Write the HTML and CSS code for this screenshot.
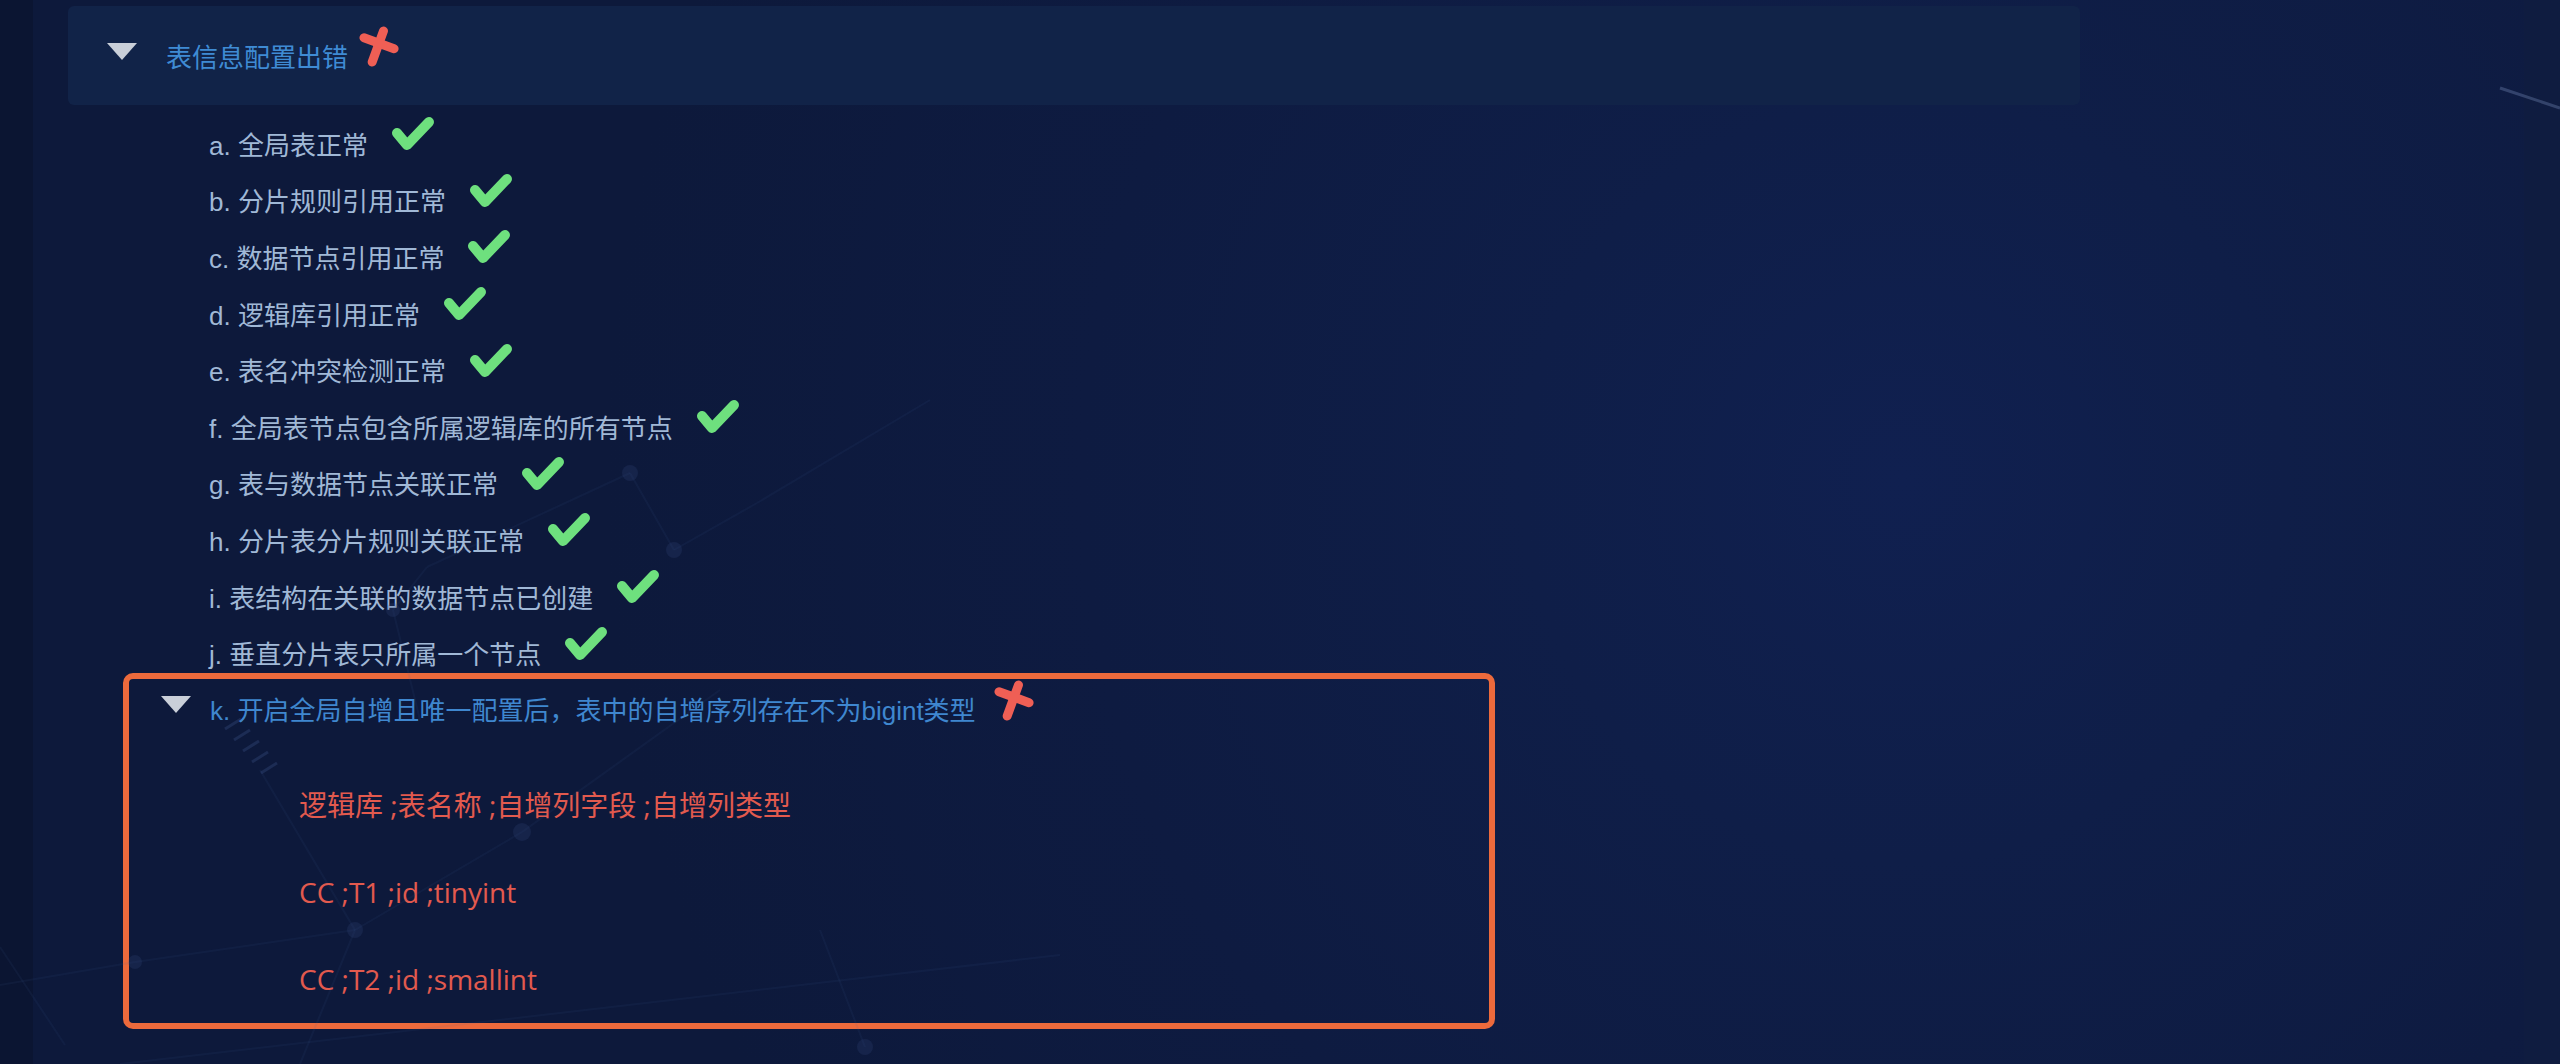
FILE: index.html
```html
<!DOCTYPE html>
<html lang="zh-CN">
<head>
<meta charset="utf-8">
<title>表信息配置检查</title>
<link rel="stylesheet" href="styles.css">
</head>
<body>
<div class="app">
  <svg class="net" viewBox="0 0 2560 1064" aria-hidden="true">
    <g class="net-lines">
      <line x1="630" y1="473" x2="674" y2="550"/>
      <line x1="674" y1="550" x2="757" y2="503"/>
      <line x1="757" y1="503" x2="930" y2="400"/>
      <line x1="630" y1="473" x2="427" y2="567"/>
      <line x1="427" y1="567" x2="393" y2="610"/>
      <line x1="393" y1="610" x2="420" y2="720"/>
      <line x1="260" y1="770" x2="355" y2="930"/>
      <line x1="355" y1="930" x2="522" y2="832"/>
      <line x1="522" y1="832" x2="720" y2="690"/>
      <line x1="135" y1="962" x2="355" y2="930"/>
      <line x1="0" y1="985" x2="135" y2="962"/>
      <line x1="0" y1="947" x2="65" y2="1045"/>
      <line x1="865" y1="1047" x2="820" y2="930"/>
      <line x1="120" y1="1064" x2="1060" y2="955"/>
      <line x1="355" y1="930" x2="300" y2="1064"/>
    </g>
    <g class="net-dots">
      <circle cx="630" cy="473" r="8"/>
      <circle cx="674" cy="550" r="8"/>
      <circle cx="393" cy="610" r="7"/>
      <circle cx="522" cy="832" r="9"/>
      <circle cx="355" cy="930" r="8"/>
      <circle cx="135" cy="962" r="7"/>
      <circle cx="865" cy="1047" r="8"/>
    </g>
    <g class="net-hatch">
      <line x1="225" y1="729" x2="241" y2="719"/>
      <line x1="234" y1="740" x2="250" y2="730"/>
      <line x1="243" y1="751" x2="259" y2="741"/>
      <line x1="252" y1="762" x2="268" y2="752"/>
      <line x1="261" y1="773" x2="277" y2="763"/>
    </g>
    <line class="net-glow" x1="2500" y1="88" x2="2560" y2="108"/>
  </svg>

  <main class="main">
    <section class="tree">
      <div class="group-head">
        <span class="caret"></span>
        <span class="group-title">表信息配置出错</span>
        <svg class="icon-x" viewBox="0 0 42 42" aria-hidden="true">
          <g transform="rotate(20 21 21)">
            <line x1="21" y1="5" x2="21" y2="38"/>
            <line x1="5" y1="18" x2="37" y2="18"/>
          </g>
        </svg>
      </div>

      <ul class="checks">
        <li class="check-item"><span class="item-text">a. 全局表正常</span><svg class="icon-ok" viewBox="0 0 46 38" aria-hidden="true"><polyline points="7,18 17,30 39,7"/></svg></li>
        <li class="check-item"><span class="item-text">b. 分片规则引用正常</span><svg class="icon-ok" viewBox="0 0 46 38" aria-hidden="true"><polyline points="7,18 17,30 39,7"/></svg></li>
        <li class="check-item"><span class="item-text">c. 数据节点引用正常</span><svg class="icon-ok" viewBox="0 0 46 38" aria-hidden="true"><polyline points="7,18 17,30 39,7"/></svg></li>
        <li class="check-item"><span class="item-text">d. 逻辑库引用正常</span><svg class="icon-ok" viewBox="0 0 46 38" aria-hidden="true"><polyline points="7,18 17,30 39,7"/></svg></li>
        <li class="check-item"><span class="item-text">e. 表名冲突检测正常</span><svg class="icon-ok" viewBox="0 0 46 38" aria-hidden="true"><polyline points="7,18 17,30 39,7"/></svg></li>
        <li class="check-item"><span class="item-text">f. 全局表节点包含所属逻辑库的所有节点</span><svg class="icon-ok" viewBox="0 0 46 38" aria-hidden="true"><polyline points="7,18 17,30 39,7"/></svg></li>
        <li class="check-item"><span class="item-text">g. 表与数据节点关联正常</span><svg class="icon-ok" viewBox="0 0 46 38" aria-hidden="true"><polyline points="7,18 17,30 39,7"/></svg></li>
        <li class="check-item"><span class="item-text">h. 分片表分片规则关联正常</span><svg class="icon-ok" viewBox="0 0 46 38" aria-hidden="true"><polyline points="7,18 17,30 39,7"/></svg></li>
        <li class="check-item"><span class="item-text">i. 表结构在关联的数据节点已创建</span><svg class="icon-ok" viewBox="0 0 46 38" aria-hidden="true"><polyline points="7,18 17,30 39,7"/></svg></li>
        <li class="check-item"><span class="item-text">j. 垂直分片表只所属一个节点</span><svg class="icon-ok" viewBox="0 0 46 38" aria-hidden="true"><polyline points="7,18 17,30 39,7"/></svg></li>

        <li class="error-box">
          <div class="err-head">
            <span class="caret"></span>
            <span class="err-title">k. 开启全局自增且唯一配置后，表中的自增序列存在不为bigint类型</span>
            <svg class="icon-x icon-x-sm" viewBox="0 0 42 42" aria-hidden="true">
              <g transform="rotate(20 21 21)">
                <line x1="21" y1="5" x2="21" y2="38"/>
                <line x1="5" y1="18" x2="37" y2="18"/>
              </g>
            </svg>
          </div>
          <div class="err-body">
            <p>逻辑库 ;表名称 ;自增列字段 ;自增列类型</p>
            <p>CC ;T1 ;id ;tinyint</p>
            <p>CC ;T2 ;id ;smallint</p>
          </div>
        </li>
      </ul>
    </section>
  </main>
  <div class="right-strip"></div>
</div>
</body>
</html>
```

FILE: styles.css
```css
* {
  box-sizing: border-box;
}

html, body {
  margin: 0;
  padding: 0;
  width: 2560px;
  height: 1064px;
  overflow: hidden;
  background: #0b1632;
}

.app {
  position: relative;
  width: 2560px;
  height: 1064px;
  display: flex;
  background: #0b1532;
}

.main {
  position: relative;
  z-index: 1;
  margin-left: 33px;
  width: 2491px;
  height: 1064px;
  background:
    radial-gradient(circle at 1870px 480px, #102050 0, #0f1e48 380px, #0e1b41 820px, #0d193b 1300px);
}

.right-strip {
  position: relative;
  z-index: 1;
  flex: 1;
  height: 1064px;
  background: #0f1c40;
}

.net {
  position: absolute;
  left: 0;
  top: 0;
  width: 2560px;
  height: 1064px;
  z-index: 2;
  pointer-events: none;
}

.net-lines line {
  stroke: rgba(70, 95, 150, 0.09);
  stroke-width: 2;
}

.net-dots circle {
  fill: rgba(60, 82, 135, 0.2);
}

.net-hatch line {
  stroke: rgba(70, 95, 150, 0.28);
  stroke-width: 3;
}

.net-glow {
  stroke: rgba(120, 140, 185, 0.35);
  stroke-width: 3;
}

.tree {
  position: relative;
  z-index: 3;
  padding: 6px 0 0 35px;
  font-family: "Liberation Sans", "Noto Sans CJK SC", sans-serif;
}

.group-head {
  width: 2012px;
  height: 99px;
  display: flex;
  align-items: center;
  padding-left: 39px;
  background: #112348;
  border-radius: 6px;
}

.caret {
  width: 0;
  height: 0;
  border-left: 15px solid transparent;
  border-right: 15px solid transparent;
  border-top: 17px solid #c9cfd9;
  margin-top: -8px;
}

.group-title {
  margin-left: 29px;
  font-size: 26px;
  color: #3f8bd4;
  font-family: "Noto Sans CJK SC", sans-serif;
}

.icon-x {
  width: 42px;
  height: 42px;
  margin-left: 9px;
  margin-bottom: 20px;
}

.icon-x line {
  stroke: #ef5f55;
  stroke-width: 9;
  stroke-linecap: round;
}

.checks {
  list-style: none;
  margin: 10px 0 0 0;
  padding: 0;
}

.check-item {
  height: 56.6px;
  display: flex;
  align-items: center;
  padding-left: 141px;
}

.item-text {
  font-size: 26px;
  color: #a0b8d6;
  white-space: nowrap;
}

.icon-ok {
  width: 46px;
  height: 38px;
  margin-left: 22px;
  margin-bottom: 18px;
}

.icon-ok polyline {
  fill: none;
  stroke: #6ee07e;
  stroke-width: 10;
  stroke-linecap: round;
  stroke-linejoin: round;
}

.error-box {
  margin: -8px 0 0 55px;
  width: 1372px;
  border: 6px solid #ec6a3c;
  border-radius: 10px;
  padding-top: 2px;
}

.err-head {
  height: 56px;
  display: flex;
  align-items: center;
  padding-left: 32px;
}

.err-title {
  margin-left: 19px;
  font-size: 26px;
  color: #3f87cf;
  white-space: nowrap;
}

.icon-x-sm {
  margin-left: 16px;
  margin-bottom: 18px;
}

.err-body {
  margin-top: 25px;
  padding-left: 170px;
}

.err-body p {
  margin: 0;
  height: 87px;
  line-height: 87px;
  font-size: 28px;
  color: #e25a4e;
  font-family: "Open Sans", "Noto Sans CJK SC", sans-serif;
  white-space: nowrap;
}
```
